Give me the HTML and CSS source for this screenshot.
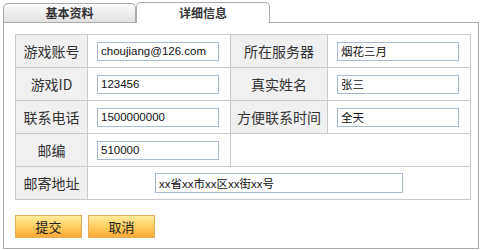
FILE: index.html
```html
<!DOCTYPE html>
<html lang="zh-CN">
<head>
    <meta charset="UTF-8">
    <title>详细信息</title>
    <link rel="stylesheet" href="styles.css">
</head>
<body>
    <div class="tabs">
        <div class="tab">基本资料</div>
        <div class="tab active">详细信息</div>
    </div>
    <div class="panel">
        <table class="info">
            <colgroup>
                <col class="c-label">
                <col class="c-value">
                <col class="c-label2">
                <col class="c-value">
            </colgroup>
            <tr>
                <th>游戏账号</th>
                <td><input class="field" type="text" value="choujiang@126.com"></td>
                <th>所在服务器</th>
                <td><input class="field" type="text" value="烟花三月"></td>
            </tr>
            <tr>
                <th>游戏ID</th>
                <td><input class="field" type="text" value="123456"></td>
                <th>真实姓名</th>
                <td><input class="field" type="text" value="张三"></td>
            </tr>
            <tr>
                <th>联系电话</th>
                <td><input class="field" type="text" value="1500000000"></td>
                <th>方便联系时间</th>
                <td><input class="field" type="text" value="全天"></td>
            </tr>
            <tr>
                <th>邮编</th>
                <td><input class="field" type="text" value="510000"></td>
                <td colspan="2"></td>
            </tr>
            <tr>
                <th>邮寄地址</th>
                <td colspan="3" class="center"><input class="field wide" type="text" value="xx省xx市xx区xx街xx号"></td>
            </tr>
        </table>
        <div class="actions">
            <button class="btn">提交</button>
            <button class="btn">取消</button>
        </div>
    </div>
</body>
</html>
```

FILE: styles.css
```css
body {
    margin: 0;
    font-family: "Liberation Sans", "Noto Sans CJK SC", sans-serif;
    color: #333;
    background: #fff;
}
.tabs {
    display: flex;
    align-items: flex-end;
    padding: 2px 0 0 3px;
}
.tab {
    width: 131px;
    height: 18px;
    line-height: 17px;
    border: 1px solid #ababab;
    border-bottom: none;
    border-radius: 5px 5px 0 0;
    background: linear-gradient(#fbfbfb, #e1e1e1);
    font-family: "Noto Sans CJK SC", sans-serif;
    font-size: 12px;
    font-weight: bold;
    text-align: center;
    color: #333;
}
.tab.active {
    width: 132px;
    height: 20px;
    line-height: 19px;
    margin-bottom: -1px;
    background: #fff;
    position: relative;
    z-index: 1;
}
.panel {
    margin: 0 3px;
    border: 1px solid #ababab;
    padding: 11px 0 0 11px;
    box-sizing: border-box;
    height: 227px;
}
.info {
    border-collapse: collapse;
    table-layout: fixed;
    width: 456px;
}
.c-label { width: 72px; }
.c-value { width: 143px; }
.c-label2 { width: 97px; }
.info th,
.info td {
    border: 1px solid #c9c9c9;
    height: 32px;
    padding: 0;
}
.info th {
    background: #f0f0f0;
    font-family: "Noto Sans CJK SC", sans-serif;
    font-size: 14px;
    font-weight: normal;
    color: #333;
    text-align: center;
}
.info td {
    padding-left: 9px;
}
.info td.center {
    padding-left: 0;
    text-align: center;
}
.field {
    width: 122px;
    height: 19px;
    box-sizing: border-box;
    border: 1px solid #a7bcd4;
    padding: 0 3px;
    margin: 0;
    font-family: "Liberation Sans", "Noto Sans CJK SC", sans-serif;
    font-size: 11.5px;
    color: #111;
    vertical-align: middle;
}
.field.wide {
    width: 248px;
    height: 20px;
}
.actions {
    display: flex;
    gap: 6px;
    margin-top: 15px;
}
.btn {
    width: 67px;
    height: 23px;
    border: 1px solid #e3ad5c;
    background: linear-gradient(#ffec9c, #ffcb5a 55%, #f8a935);
    font-family: "Noto Sans CJK SC", sans-serif;
    font-size: 13px;
    color: #222;
    padding: 0;
    cursor: pointer;
}
```
